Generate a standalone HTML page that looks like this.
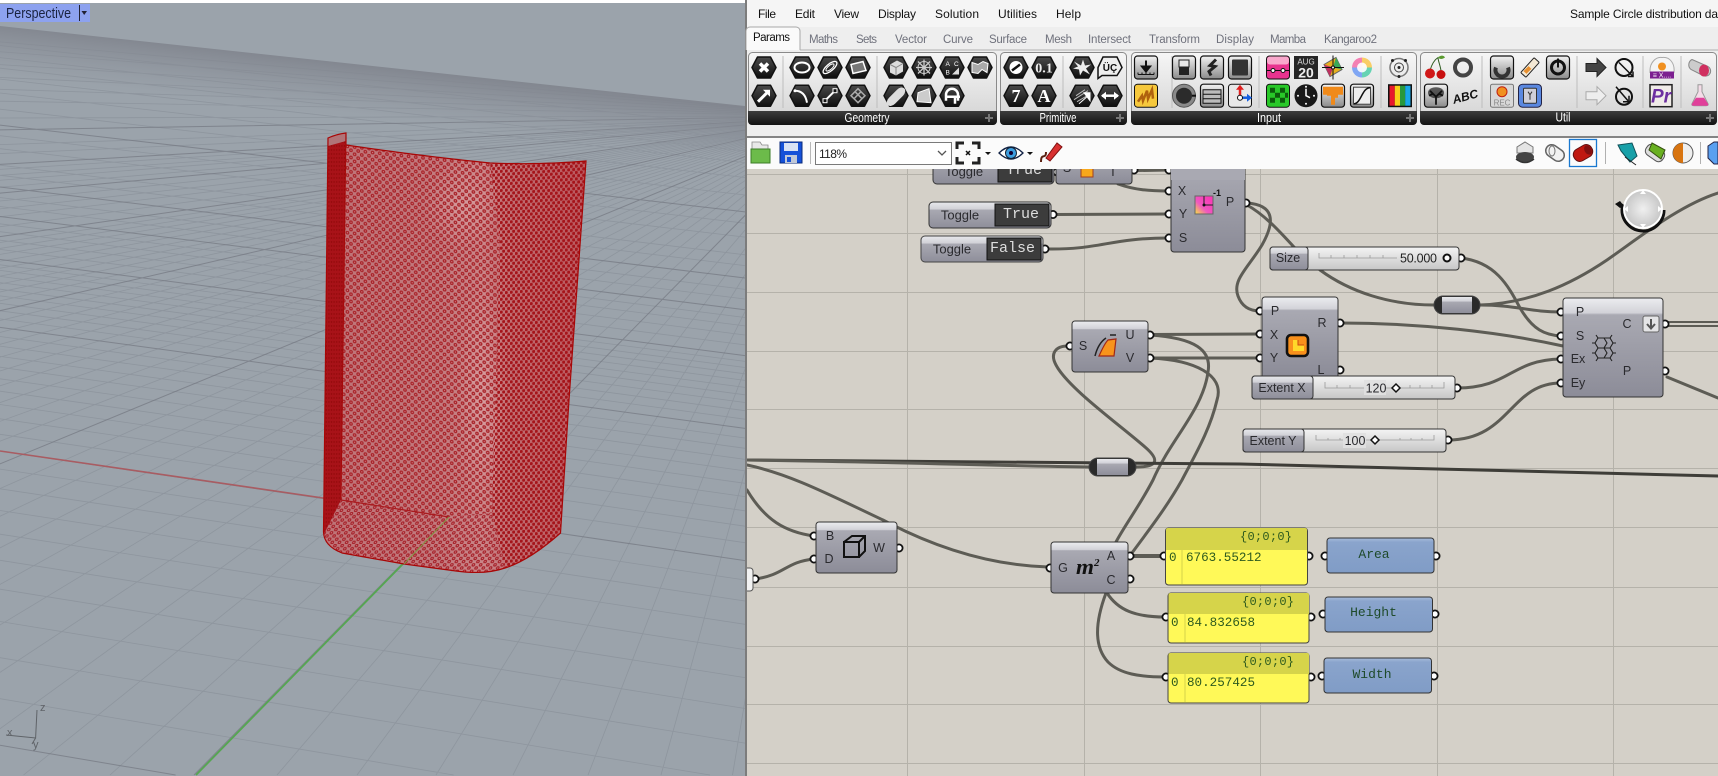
<!DOCTYPE html>
<html><head><meta charset="utf-8"><title>Rhino Grasshopper</title>
<style>
html,body{margin:0;padding:0;background:#d4d0c8;overflow:hidden;width:1718px;height:776px}
svg{display:block;font-family:"Liberation Sans","DejaVu Sans",sans-serif}
.w{fill:none;stroke:#5d5c55;stroke-width:3;stroke-linecap:round}
.g{fill:#fff;stroke:#111;stroke-width:1.8}
.l{font-size:12.5px;fill:#2a2a2e;text-anchor:middle}
.mono{font-family:"Liberation Mono",monospace}
.tb{font-size:11.5px;fill:#6f717c}
.mn{font-size:12px;fill:#111}
.bar{font-size:12.5px;fill:#fff;text-anchor:middle}
.ic{fill:#fff}
.is{fill:none;stroke:#fff;stroke-width:2}
.cl{stroke:#b5b2aa;stroke-width:1}
</style></head><body>
<svg width="1718" height="776" viewBox="0 0 1718 776" xmlns="http://www.w3.org/2000/svg">
<defs>
<linearGradient id="band" gradientUnits="userSpaceOnUse" x1="372" y1="66" x2="366" y2="120"><stop offset="0" stop-color="#80848d" stop-opacity=".9"/><stop offset="1" stop-color="#8d939c" stop-opacity="0"/></linearGradient>
<linearGradient id="bot" gradientUnits="userSpaceOnUse" x1="340" y1="0" x2="580" y2="0"><stop offset="0" stop-color="#bf7478"/><stop offset=".4" stop-color="#c27a7e"/><stop offset=".6" stop-color="#ca8689"/><stop offset=".72" stop-color="#c06e72"/><stop offset="1" stop-color="#bb5a60"/></linearGradient>
<radialGradient id="hl"><stop offset="0" stop-color="#f0c8c8" stop-opacity=".35"/><stop offset="1" stop-color="#f0c8c8" stop-opacity="0"/></radialGradient>
<pattern id="p1" width="7.2" height="7.2" patternUnits="userSpaceOnUse" patternTransform="skewY(6)"><circle cx="1.8" cy="1.8" r="1.9" fill="#a8242a"/><circle cx="1.8" cy="1.8" r=".55" fill="#d89094"/><circle cx="5.4" cy="5.4" r="1.9" fill="#a8242a"/><circle cx="5.4" cy="5.4" r=".55" fill="#d89094"/></pattern>
<pattern id="p2" width="5" height="6.4" patternUnits="userSpaceOnUse" patternTransform="skewY(-4)"><circle cx="1.2" cy="1.6" r="1.6" fill="#a5141a"/><circle cx="3.7" cy="4.8" r="1.6" fill="#a5141a"/></pattern>
<pattern id="p3" width="7.2" height="6.4" patternUnits="userSpaceOnUse" patternTransform="skewX(-16)"><circle cx="1.8" cy="1.6" r="1.8" fill="#a5222a"/><circle cx="1.8" cy="1.6" r=".55" fill="#d89094"/><circle cx="5.4" cy="4.8" r="1.8" fill="#a5222a"/><circle cx="5.4" cy="4.8" r=".55" fill="#d89094"/></pattern>
<pattern id="p4" width="2.6" height="4" patternUnits="userSpaceOnUse"><rect width="2.6" height="4" fill="#a81218"/><circle cx="1.3" cy="2" r=".7" fill="#8f0808"/></pattern>
<linearGradient id="cb" x1="0" y1="0" x2="0" y2="1"><stop offset="0" stop-color="#ecedf0"/><stop offset=".15" stop-color="#d2d2d8"/><stop offset=".17" stop-color="#a9a9b2"/><stop offset="1" stop-color="#8c8c98"/></linearGradient>
<linearGradient id="tg" x1="0" y1="0" x2="0" y2="1"><stop offset="0" stop-color="#e8e9ec"/><stop offset=".28" stop-color="#d0d0d6"/><stop offset=".3" stop-color="#a9a9b2"/><stop offset="1" stop-color="#8e8e9a"/></linearGradient>
<linearGradient id="st" x1="0" y1="0" x2="0" y2="1"><stop offset="0" stop-color="#f4f4f4"/><stop offset="1" stop-color="#c6c6c6"/></linearGradient>
<linearGradient id="rb" x1="0" y1="0" x2="0" y2="1"><stop offset="0" stop-color="#f6f6f6"/><stop offset="1" stop-color="#d2d2d2"/></linearGradient>
<linearGradient id="bk" x1="0" y1="0" x2="0" y2="1"><stop offset="0" stop-color="#3c3c3c"/><stop offset="1" stop-color="#121212"/></linearGradient>
<linearGradient id="hx" x1="0" y1="0" x2="0" y2="1"><stop offset="0" stop-color="#4a4a4a"/><stop offset="1" stop-color="#0e0e0e"/></linearGradient>
<linearGradient id="ig" x1="0" y1="0" x2="0" y2="1"><stop offset="0" stop-color="#f2f2f2"/><stop offset="1" stop-color="#8a8a8a"/></linearGradient>
<linearGradient id="pb" x1="0" y1="0" x2="0" y2="1"><stop offset="0" stop-color="#a8bcdc"/><stop offset=".12" stop-color="#8aa4cc"/><stop offset="1" stop-color="#809cc6"/></linearGradient>
<radialGradient id="dial"><stop offset="0" stop-color="#f0f0f0"/><stop offset="1" stop-color="#c6c6c6"/></radialGradient>
<linearGradient id="pk" x1="1" y1="0" x2="0" y2="1"><stop offset="0" stop-color="#ff2fb4"/><stop offset=".6" stop-color="#f058c0"/><stop offset="1" stop-color="#f6e640"/></linearGradient>
<polygon id="hex" points="-12,0 -6.5,-10.5 6.5,-10.5 12,0 6.5,10.5 -6.5,10.5" fill="url(#hx)" stroke="#111" stroke-width="1.5" stroke-linejoin="round"/>
<rect id="sq" x="-11.5" y="-11.5" width="23" height="23" rx="3" fill="url(#ig)" stroke="#111" stroke-width="1.2"/>
<clipPath id="vp"><rect x="0" y="3" width="745" height="773"/></clipPath>
<clipPath id="cv"><rect x="747" y="169" width="971" height="607"/></clipPath>
<clipPath id="gnd"><polygon points="0,26 745,106 745,776 0,776"/></clipPath>
</defs>

<!-- LEFT VIEWPORT -->
<rect width="746" height="776" fill="#fff"/>
<g clip-path="url(#vp)">
<rect x="0" y="3" width="745" height="773" fill="#9ba3ab"/>
<g clip-path="url(#gnd)">
<path fill="none" stroke="#838a94" stroke-width=".8" stroke-opacity=".55" d="M843,116L732.5,775M843,116L661,775M843,116L588,775M843,116L513,775M843,116L436,775M843,116L357,775M843,116L277,775M843,116L110,775M843,116L23.5,775M843,116L-10,736M843,116L-10,679M843,116L-10,631M843,116L-10,590M843,116L-10,553M843,116L-10,521M843,116L-10,493M843,116L-10,445M843,116L-10,425M843,116L-10,406M843,116L-10,389M843,116L-10,374M843,116L-10,360M843,116L-10,347M843,116L-10,335M843,116L-10,323M843,116L-10,303M843,116L-10,294M843,116L-10,286M843,116L-10,278M843,116L-10,270M843,116L-10,263M843,116L-10,256M843,116L-10,250M843,116L-10,244M843,116L-10,228M843,116L-10,218M843,116L-10,210M843,116L-10,202M843,116L-10,188M843,116L-10,181M843,116L-10,176M843,116L-10,170M843,116L-10,154M843,116L-10,145M843,116L-10,118M843,116L-10,101M843,116L-10,89M843,116L-10,77M843,116L-10,64M843,116L-10,51M843,116L-10,41
M0,698.7L453.6,775M0,657.7L710,775M0,621.5L745,743.1M0,589.2L745,708.5M0,560.3L745,677.6M0,534.2L745,649.6M0,510.5L745,624.3M0,488.8L745,601M0,469.1L745,580M0,434.3L745,542.7M0,418.8L745,526.2M0,404.5L745,510.8M0,391.2L745,496.6M0,378.8L745,483.3M0,367.2L745,470.9M0,356.4L745,459.4M0,346.1L745,448.3M0,336.5L745,438M0,318.9L745,419.2M0,310.8L745,410.7M0,303.3L745,402.5M0,295.9L745,394.8M0,289.2L745,387.4M0,282.6L745,380.4M0,276.4L745,373.8M0,270.4L745,367.5M0,264.8L745,361.4M0,249.4L745,344.9M0,240.2L745,335M0,231.7L745,325.9M0,223.8L745,317.5M0,206.5L745,299M0,197.5L745,289.4M0,175.3L745,265.6M0,165.2L745,254.8M0,148.7L745,237.1M0,135.7L745,223.2M0,109.2L745,195M0,93L745,177.5M0,79.1L745,162.6M0,68.2L745,151M0,57.6L745,139.7M0,45.5L745,126.7"/>
<path fill="none" stroke="#767983" stroke-width="1" stroke-opacity=".75" d="M843,116L194,775M843,116L-10,468M843,116L-10,313M843,116L-10,238M843,116L-10,194M843,116L-10,165M843,116L-10,130M0,745.3L175.6,775M0,451L745,560.6M0,327.4L745,428.4M0,259.5L745,355.6M0,216.5L745,309.7M0,187L745,278M0,125.1L745,211.9"/>
</g>
<polygon points="0,26 745,106 745,180 0,100" fill="url(#band)"/>
<line x1="0" y1="451" x2="330" y2="499" stroke="#a95c62" stroke-width="1.6"/>
<line x1="449" y1="517" x2="196" y2="775" stroke="#55a651" stroke-width="1.8"/>
<!-- bottle -->
<path d="M346,133 L346,145 Q420,156 490,163 Q540,165 586,161 L569,400 L560.5,533 Q530,560 505,568 Q485,575 456,571 L404,564 L342,553 Q324,546 323.500,532 L341,500 Z" fill="url(#bot)"/>
<ellipse cx="462" cy="205" rx="40" ry="45" fill="url(#hl)"/>
<ellipse cx="482" cy="400" rx="26" ry="120" fill="url(#hl)"/>
<path d="M346,145 Q420,156 490,163 L500,240 L492,513 L449,517 L341,500 Z" fill="url(#p1)"/>
<path d="M490,163 Q540,165 586,161 L569,400 L560.5,533 Q530,560 505,568 L492,513 L500,240 Z" fill="url(#p2)"/>
<path d="M341,500 L449,517 L492,513 L505,568 Q485,575 456,571 L404,564 L342,553 Q324,546 323.500,532 Z" fill="url(#p3)"/>
<path d="M328,138 Q337,134 346,133 L341,500 L323.500,535 Z" fill="url(#p4)"/>
<path d="M328,138 Q337,134 346,133 L346,141 L328,146Z" fill="#b07478"/>
<path d="M328,138 Q337,134 346,133 L346,145 Q420,156 490,163 Q540,165 586,161 L569,400 L560.5,533 Q530,560 505,568 Q485,575 456,571 L404,564 L342,553 Q324,546 323.500,532 Z" fill="none" stroke="#a80606" stroke-width="1.2"/>
<line x1="341" y1="500" x2="449" y2="517" stroke="#a91a1e" stroke-width="1.2"/>
<line x1="449" y1="517" x2="404" y2="564" stroke="#7f9a45" stroke-width="1"/>
<line x1="346" y1="133" x2="341" y2="500" stroke="#a50a0a" stroke-width="1"/>
<!-- gizmo -->
<path d="M37,710 L35.6,738 L6,735 M35.6,738 L32,744" fill="none" stroke="#5f6368" stroke-width="1"/>
<text x="40" y="711" font-size="11" fill="#5f6368">z</text>
<text x="7" y="736" font-size="11" fill="#5f6368">x</text>
<text x="33" y="748" font-size="11" fill="#5f6368">y</text>
<!-- tab -->
<rect x="0" y="4" width="90" height="18" fill="#8da2ef"/>
<text x="6" y="18" font-size="15" fill="#1a2340" textLength="65" lengthAdjust="spacingAndGlyphs">Perspective</text>
<line x1="79.5" y1="5" x2="79.5" y2="21" stroke="#223"/>
<polygon points="81.5,11 87,11 84.2,15" fill="#223"/>
</g>
<rect x="745" y="0" width="2" height="776" fill="#7c7c7c"/>

<!-- CANVAS -->
<rect x="747" y="0" width="971" height="776" fill="#d4d0c8"/>
<g class="cl">
<line x1="907.5" y1="169" x2="907.5" y2="776"/><line x1="1084.5" y1="169" x2="1084.5" y2="776"/><line x1="1260.5" y1="169" x2="1260.5" y2="776"/><line x1="1437.5" y1="169" x2="1437.5" y2="776"/><line x1="1613.5" y1="169" x2="1613.5" y2="776"/>
<line x1="747" y1="174.5" x2="1718" y2="174.5"/><line x1="747" y1="233.5" x2="1718" y2="233.5"/><line x1="747" y1="292.5" x2="1718" y2="292.5"/><line x1="747" y1="351.5" x2="1718" y2="351.5"/><line x1="747" y1="409.5" x2="1718" y2="409.5"/><line x1="747" y1="468.5" x2="1718" y2="468.5"/><line x1="747" y1="527.5" x2="1718" y2="527.5"/><line x1="747" y1="587.5" x2="1718" y2="587.5"/><line x1="747" y1="646.5" x2="1718" y2="646.5"/><line x1="747" y1="704.5" x2="1718" y2="704.5"/><line x1="747" y1="763.5" x2="1718" y2="763.5"/>
</g>
<g clip-path="url(#cv)">
<!-- wires -->
<g class="wires">
<path class="w" d="M1055,214.5 L1168,214"/>
<path class="w" d="M1046,249 C1100,250 1110,238 1168,238"/>
<path class="w" d="M1057,172 L1168,170"/>
<path class="w" d="M1118,184 C1135,190 1150,191 1168,191"/>
<path class="w" d="M1247,203 C1275,205 1275,222 1262,245 C1248,268 1232,280 1238,296 C1242,307 1250,311 1260,311"/>
<path class="w" d="M1247,205 C1265,215 1280,232 1293,246 C1305,258 1315,266 1320,270 C1350,292 1390,305 1434,305"/>
<path class="w" d="M1480,305 C1515,305 1530,312 1561,312"/>
<path class="w" d="M1480,305 C1530,303 1570,285 1607,260 C1640,237 1680,205 1718,193"/>
<path class="w" d="M1461,258 C1495,262 1508,285 1520,308 C1533,330 1545,335 1561,336"/>
<path class="w" d="M1340,323 C1420,323 1500,332 1563,346"/>
<path class="w" d="M1457,388 C1510,388 1510,360 1561,359"/>
<path class="w" d="M1448,440 C1510,440 1510,383 1561,383"/>
<path class="w" style="stroke-width:2" d="M1667,322 H1718"/>
<path class="w" style="stroke-width:2" d="M1667,326 H1718"/>
<path class="w" d="M1667,377 L1718,398"/>
<path class="w" d="M1150,334.5 L1260,334"/>
<path class="w" d="M1150,358 L1260,358"/>
<path class="w" d="M1068,346 C1055,346 1050,354 1056,365 C1068,388 1120,425 1145,447 C1160,460 1158,467 1136,467"/>
<path class="w" d="M1150,335 C1195,338 1212,350 1208,372 C1203,410 1170,440 1153,480 C1140,505 1125,525 1116,542"/>
<path class="w" d="M1150,358 C1195,360 1225,375 1217,400 C1210,430 1195,455 1182,480 C1165,510 1145,535 1129,557"/>
<path class="w" style="stroke:#3e3d38" d="M747,460 L1240,464 L1718,476"/>
<path class="w" d="M747,460 C900,462 1000,466 1089,467"/>
<path class="w" d="M747,465 C790,474 830,495 883,520 C930,545 985,565 1048,567"/>
<path class="w" d="M747,490 C765,520 785,532 814,536"/>
<path class="w" d="M755,579 C785,575 785,562 814,559"/>
<path class="w" d="M1130,556 H1163" style="stroke-width:4"/>
<path class="w" d="M1107,593 C1118,610 1135,617 1165,617"/>
<path class="w" d="M1106,593 C1094,625 1095,648 1108,662 C1120,674 1140,677 1165,677"/>
</g>
<!-- grips -->
<g class="g">
<circle cx="1057" cy="172" r="3.6"/><circle cx="1134" cy="170" r="3.6"/><circle cx="1169" cy="170" r="3.6"/><circle cx="1169" cy="191" r="3.6"/><circle cx="1169" cy="214" r="3.6"/><circle cx="1169" cy="238" r="3.6"/><circle cx="1246" cy="203" r="3.6"/>
<circle cx="1053" cy="214.5" r="3.6"/><circle cx="1045" cy="249" r="3.6"/><circle cx="1461" cy="258" r="3.6"/><circle cx="1457" cy="388" r="3.6"/><circle cx="1448" cy="440" r="3.6"/>
<circle cx="1260" cy="311" r="3.6"/><circle cx="1260" cy="334" r="3.6"/><circle cx="1260" cy="358" r="3.6"/><circle cx="1340" cy="323" r="3.6"/><circle cx="1340" cy="370" r="3.6"/>
<circle cx="1561" cy="312" r="3.6"/><circle cx="1561" cy="336" r="3.6"/><circle cx="1561" cy="359" r="3.6"/><circle cx="1561" cy="383" r="3.6"/><circle cx="1665" cy="324" r="3.6"/><circle cx="1665" cy="371" r="3.6"/>
<circle cx="1070" cy="346" r="3.6"/><circle cx="1150" cy="335" r="3.6"/><circle cx="1150" cy="358" r="3.6"/>
<circle cx="814" cy="536" r="3.6"/><circle cx="814" cy="559" r="3.6"/><circle cx="899" cy="548" r="3.6"/><circle cx="755" cy="579" r="3.6"/>
<circle cx="1050" cy="568" r="3.6"/><circle cx="1130" cy="556" r="3.6"/><circle cx="1130" cy="579" r="3.6"/>
<circle cx="1164" cy="556" r="3.6"/><circle cx="1309" cy="556" r="3.6"/><circle cx="1166" cy="617" r="3.6"/><circle cx="1311" cy="617" r="3.6"/><circle cx="1166" cy="677" r="3.6"/><circle cx="1311" cy="677" r="3.6"/>
<circle cx="1325" cy="556" r="3.6"/><circle cx="1436" cy="556" r="3.6"/><circle cx="1323" cy="614" r="3.6"/><circle cx="1435" cy="614" r="3.6"/><circle cx="1322" cy="676" r="3.6"/><circle cx="1434" cy="676" r="3.6"/>
</g>
<!-- clipped toggle -->
<rect x="933" y="150" width="121" height="34" rx="4" fill="url(#cb)" stroke="#333"/>
<text class="l" x="964" y="176" style="font-size:13px">Toggle</text>
<rect x="998" y="150" width="54" height="32" fill="#3c3c3c" stroke="#111"/>
<text class="mono" x="1006" y="174" font-size="15" fill="#ddd">True</text>
<rect x="1056" y="150" width="76" height="34" rx="3" fill="url(#cb)" stroke="#333"/>
<text class="l" x="1067" y="172">S</text><rect x="1081" y="160" width="12" height="17" fill="#f8a81c" stroke="#a04020"/><text class="l" x="1113" y="176">T</text>
<!-- XY rect comp -->
<rect x="1171" y="150" width="74" height="102" rx="3" fill="url(#cb)" stroke="#333"/>
<rect x="1171" y="150" width="74" height="30" fill="#a9a9b2"/>
<text class="l" x="1182" y="195">X</text><text class="l" x="1183" y="218">Y</text><text class="l" x="1183" y="242">S</text><text class="l" x="1230" y="206">P</text>
<rect x="1195" y="196" width="18" height="18" fill="url(#pk)" stroke="#666"/><path d="M1204,196 V205 H1213" fill="none" stroke="#222" stroke-width="1"/><circle cx="1204" cy="205" r="1.500" fill="#111"/><text x="1213" y="196" font-size="9" font-weight="bold" fill="#111">-1</text>
<!-- toggles -->
<rect x="929" y="202" width="122" height="26" rx="4" fill="url(#tg)" stroke="#333"/>
<text class="l" x="960" y="219.500" style="font-size:13px">Toggle</text>
<rect x="995" y="204" width="54" height="22" fill="#3c3c3c" stroke="#111"/>
<text class="mono" x="1003" y="218" font-size="15" fill="#ddd">True</text>
<rect x="921" y="236" width="122" height="26" rx="4" fill="url(#tg)" stroke="#444"/>
<text class="l" x="952" y="253.500" style="font-size:13px">Toggle</text>
<rect x="987" y="238" width="54" height="22" fill="#3c3c3c" stroke="#111"/>
<text class="mono" x="990" y="252" font-size="15" fill="#ddd">False</text>
<!-- UV comp -->
<rect x="1072" y="321" width="76" height="51" rx="3" fill="url(#cb)" stroke="#333"/>
<text class="l" x="1083" y="350">S</text><text class="l" x="1130" y="339">U</text><text class="l" x="1130" y="362">V</text>
<path d="M1099,356 C1103,347 1106,342 1108,340 L1116,339 L1114,356 Z" fill="#f8941c" stroke="#a02818" stroke-width="1.2"/>
<path d="M1095,356 C1097,348 1100,342 1106,338 M1110,335 H1116" fill="none" stroke="#222" stroke-width="1.5"/>
<!-- sliders -->
<rect x="1270" y="247" width="189" height="23" rx="3" fill="url(#st)" stroke="#333"/>
<rect x="1270" y="247" width="38" height="23" rx="3" fill="url(#tg)" stroke="#333"/>
<text class="l" x="1288" y="262">Size</text>
<path d="M1319,253 V258 H1397 M1331,255 V258 M1344,255 V258 M1357,255 V258 M1370,255 V258 M1383,255 V258" fill="none" stroke="#9a9a9a" stroke-width=".8"/>
<text x="1400" y="262.5" font-size="12.5" fill="#222" textLength="37">50.000</text>
<circle cx="1447" cy="258" r="3.5" fill="#fff" stroke="#111" stroke-width="2"/>
<rect x="1252" y="376" width="203" height="23" rx="3" fill="url(#st)" stroke="#333"/>
<rect x="1252" y="376" width="61" height="23" rx="3" fill="url(#tg)" stroke="#333"/>
<text class="l" x="1282" y="392">Extent X</text>
<path d="M1325,382 V388 H1444 V382 M1337,385 V388 M1350,385 V388 M1410,385 V388 M1420,385 V388 M1432,385 V388" fill="none" stroke="#9a9a9a" stroke-width=".8"/>
<rect x="1364" y="380" width="22" height="15" fill="#e0e0e0" opacity=".9"/>
<text class="l" x="1376" y="392.5">120</text>
<path d="M1396,384 L1400,388 1396,392 1392,388Z" fill="#fff" stroke="#111" stroke-width="1.5"/>
<rect x="1243" y="429" width="203" height="23" rx="3" fill="url(#st)" stroke="#333"/>
<rect x="1243" y="429" width="61" height="23" rx="3" fill="url(#tg)" stroke="#333"/>
<text class="l" x="1273" y="445">Extent Y</text>
<path d="M1316,435 V440 H1434 V435 M1328,438 V440 M1340,438 V440 M1400,438 V440 M1411,438 V440 M1422,438 V440" fill="none" stroke="#9a9a9a" stroke-width=".8"/>
<rect x="1343" y="433" width="23" height="15" fill="#e0e0e0" opacity=".9"/>
<text class="l" x="1355" y="445">100</text>
<path d="M1375,436 L1379,440 1375,444 1371,440Z" fill="#fff" stroke="#111" stroke-width="1.5"/>
<!-- Rect comp -->
<path d="M1262,376 V300 a3,3 0 0 1 3,-3 H1335 a3,3 0 0 1 3,3 V376 Z" fill="url(#cb)" stroke="#333"/>
<text class="l" x="1275" y="315">P</text><text class="l" x="1274" y="339">X</text><text class="l" x="1274" y="362">Y</text><text class="l" x="1322" y="327">R</text><text class="l" x="1321" y="374">L</text>
<rect x="1287" y="335" width="21" height="21" rx="4" fill="#f8901c" stroke="#111" stroke-width="2.600"/><path d="M1293,340 V351 H1304 V345 H1298 V340Z" fill="#ffd82a"/><path d="M1298,340 V345 H1304" fill="none" stroke="#c84a10"/>
<!-- Hex comp -->
<rect x="1563" y="298" width="100" height="99" rx="3" fill="url(#cb)" stroke="#333"/>
<text class="l" x="1580" y="316">P</text><text class="l" x="1580" y="340">S</text><text class="l" x="1578" y="363">Ex</text><text class="l" x="1578" y="387">Ey</text><text class="l" x="1627" y="328">C</text><text class="l" x="1627" y="375">P</text>
<g fill="none" stroke="#222" stroke-width="1.100"><path d="M1598,338 h6 l3,5 l-3,5 h-6 l-3,-5z"/><path d="M1604,338 h6 l3,5 l-3,5 h-6"/><path d="M1598,348 l-3,5 l3,5 h6 l3,-5 l-3,-5"/><path d="M1604,358 h6 l3,-5 l-3,-5"/><path d="M1595,343 h-3 M1613,343 h3 M1595,353 h-3 M1613,353 h3 M1598,338 l-2,-3 M1610,338 l2,-3 M1598,358 l-2,3 M1610,358 l2,3"/></g>
<rect x="1643" y="316" width="16" height="16" rx="2" fill="#e4e4e6" stroke="#666"/><path d="M1651,319 V328 M1647,324 L1651,328.5 1655,324" fill="none" stroke="#555" stroke-width="2"/>
<!-- relays -->
<rect x="1434" y="296" width="46" height="18" rx="9" fill="#2a2a2a" stroke="#444"/><rect x="1442" y="297" width="30" height="16" fill="url(#tg)"/>
<rect x="1089" y="458" width="47" height="18" rx="9" fill="#2a2a2a" stroke="#444"/><rect x="1097" y="459" width="31" height="16" fill="url(#tg)"/>
<!-- dial -->
<circle cx="1643" cy="210" r="21" fill="none" stroke="#111" stroke-width="3" stroke-dasharray="72 60"/>
<circle cx="1643" cy="209" r="19" fill="url(#dial)" stroke="#fff" stroke-width="2"/>
<path d="M1643,190 l-3,4 h6z M1643,228 l-3,-4 h6z M1624,209 l4,-3 v6z M1662,209 l-4,-3 v6z" fill="#fff"/>
<path d="M1615,204 L1620,201 1624,206 1620,208Z" fill="#111"/>
<!-- box comp -->
<rect x="816" y="522" width="81" height="51" rx="3" fill="url(#cb)" stroke="#333"/>
<text class="l" x="830" y="540">B</text><text class="l" x="829" y="563">D</text><text class="l" x="879" y="552">W</text>
<g fill="none" stroke="#111" stroke-width="2"><rect x="844" y="542" width="15" height="15"/><path d="M844,542 l8,-6 h13 v15 l-6,6 M859,542 l6,-6"/></g>
<path d="M745,568 h5 a3,3 0 0 1 3,3 v17 a3,3 0 0 1 -3,3 h-5z" fill="#f2f2f2" stroke="#555"/>
<!-- area comp -->
<rect x="1051" y="542" width="77" height="51" rx="3" fill="url(#cb)" stroke="#333"/>
<text class="l" x="1063" y="572">G</text><text class="l" x="1111" y="560">A</text><text class="l" x="1111" y="584">C</text>
<text x="1076" y="574" font-family="Liberation Serif,serif" font-size="22" font-weight="bold" font-style="italic" fill="#111" textLength="18" lengthAdjust="spacingAndGlyphs">m</text><text x="1094" y="566" font-family="Liberation Serif,serif" font-size="11" font-weight="bold" font-style="italic" fill="#111">2</text>
<!-- panels -->
<g>
<rect x="1165.5" y="528" width="142" height="57" rx="3" fill="#fff958" stroke="#444"/><path d="M1166,550 V530 a2,2 0 0 1 2,-2 H1305 a2,2 0 0 1 2,2 V550 Z" fill="#d6d44a"/><line x1="1182" y1="529" x2="1182" y2="584" stroke="#d6d44a"/>
<text class="mono" x="1240" y="540" font-size="12" fill="#2d5a1e" textLength="52">{0;0;0}</text>
<text class="mono" x="1169" y="561" font-size="12.6" fill="#2d5a1e">0</text><text class="mono" x="1186" y="561" font-size="12.6" fill="#2d5a1e">6763.55212</text>
<rect x="1168" y="593" width="141" height="50" rx="3" fill="#fff958" stroke="#444"/><path d="M1168.500,614 V595 a2,2 0 0 1 2,-2 H1307 a2,2 0 0 1 2,2 V614 Z" fill="#d6d44a"/><line x1="1185" y1="594" x2="1185" y2="642" stroke="#d6d44a"/>
<text class="mono" x="1242" y="605" font-size="12" fill="#2d5a1e" textLength="52">{0;0;0}</text>
<text class="mono" x="1171" y="626" font-size="12.6" fill="#2d5a1e">0</text><text class="mono" x="1187" y="626" font-size="12.6" fill="#2d5a1e">84.832658</text>
<rect x="1168" y="653" width="141" height="50" rx="3" fill="#fff958" stroke="#444"/><path d="M1168.500,674 V655 a2,2 0 0 1 2,-2 H1307 a2,2 0 0 1 2,2 V674 Z" fill="#d6d44a"/><line x1="1185" y1="654" x2="1185" y2="702" stroke="#d6d44a"/>
<text class="mono" x="1242" y="665" font-size="12" fill="#2d5a1e" textLength="52">{0;0;0}</text>
<text class="mono" x="1171" y="686" font-size="12.6" fill="#2d5a1e">0</text><text class="mono" x="1187" y="686" font-size="12.6" fill="#2d5a1e">80.257425</text>
</g>
<!-- params -->
<rect x="1327" y="538" width="107" height="35" rx="3" fill="url(#pb)" stroke="#333"/>
<text class="mono" x="1374" y="558" font-size="13" fill="#1e4a2a" text-anchor="middle">Area</text>
<rect x="1325" y="597" width="107.500" height="35" rx="3" fill="url(#pb)" stroke="#333"/>
<text class="mono" x="1373.500" y="616" font-size="13" fill="#1e4a2a" text-anchor="middle">Height</text>
<rect x="1324" y="658" width="107.500" height="35" rx="3" fill="url(#pb)" stroke="#333"/>
<text class="mono" x="1372" y="678" font-size="13" fill="#1e4a2a" text-anchor="middle">Width</text>
</g>

<!-- MENU + TABS -->
<rect x="747" y="0" width="971" height="27" fill="#f5f5f5"/>
<g class="mn">
<text x="758" y="18" textLength="18">File</text><text x="795" y="18" textLength="20">Edit</text><text x="834" y="18" textLength="25">View</text><text x="878" y="18" textLength="38">Display</text><text x="935" y="18" textLength="44">Solution</text><text x="998" y="18" textLength="39">Utilities</text><text x="1056" y="18" textLength="25">Help</text>
<text x="1570" y="18" textLength="148">Sample Circle distribution da</text>
</g>
<rect x="747" y="27" width="971" height="109" fill="#eeeeee"/>
<path d="M746,50 V31 a4,4 0 0 1 4,-4 H796 a4,4 0 0 1 4,4 V50" fill="#fafafa" stroke="#a8a8a8"/>
<text x="753" y="41" font-size="11.5" fill="#111" textLength="37">Params</text>
<g class="tb">
<text x="809" y="43" textLength="29">Maths</text><text x="856" y="43" textLength="21">Sets</text><text x="895" y="43" textLength="32">Vector</text><text x="943" y="43" textLength="30">Curve</text><text x="989" y="43" textLength="38">Surface</text><text x="1045" y="43" textLength="27">Mesh</text><text x="1088" y="43" textLength="43">Intersect</text><text x="1149" y="43" textLength="51">Transform</text><text x="1216" y="43" textLength="38">Display</text><text x="1270" y="43" textLength="36">Mamba</text><text x="1324" y="43" textLength="53">Kangaroo2</text>
</g>
<line x1="800" y1="50" x2="1718" y2="50" stroke="#b0b0b0"/>
<!-- ribbon panels -->
<g stroke="#8a8a8a">
<rect x="748.500" y="52.500" width="248" height="72" rx="4" fill="url(#rb)"/>
<rect x="1000.500" y="52.500" width="126" height="72" rx="4" fill="url(#rb)"/>
<rect x="1131.500" y="52.500" width="285" height="72" rx="4" fill="url(#rb)"/>
<rect x="1420.500" y="52.500" width="296" height="72" rx="4" fill="url(#rb)"/>
</g>
<g fill="url(#bk)">
<path d="M748,111 H997 V121 a4,4 0 0 1 -4,4 H752 a4,4 0 0 1 -4,-4Z"/>
<path d="M1000,111 H1127 V121 a4,4 0 0 1 -4,4 H1004 a4,4 0 0 1 -4,-4Z"/>
<path d="M1131,111 H1417 V121 a4,4 0 0 1 -4,4 H1135 a4,4 0 0 1 -4,-4Z"/>
<path d="M1420,111 H1717 V121 a4,4 0 0 1 -4,4 H1424 a4,4 0 0 1 -4,-4Z"/>
</g>
<g class="bar"><text x="867" y="122" textLength="45" lengthAdjust="spacingAndGlyphs">Geometry</text><text x="1058" y="122" textLength="37" lengthAdjust="spacingAndGlyphs">Primitive</text><text x="1269" y="122" textLength="24" lengthAdjust="spacingAndGlyphs">Input</text><text x="1563" y="121.500" textLength="15" lengthAdjust="spacingAndGlyphs">Util</text></g>
<g stroke="#777" stroke-width="2"><path d="M985,118 h8 M989,114 v8"/><path d="M1116,118 h8 M1120,114 v8"/><path d="M1406,118 h8 M1410,114 v8"/><path d="M1706,118 h8 M1710,114 v8"/></g>
<g stroke="#bdbdbd"><line x1="783" y1="56" x2="783" y2="108"/><line x1="877" y1="56" x2="877" y2="108"/><line x1="1063" y1="56" x2="1063" y2="108"/><line x1="1172" y1="56" x2="1172" y2="108"/><line x1="1259" y1="56" x2="1259" y2="108"/><line x1="1381" y1="56" x2="1381" y2="108"/><line x1="1482" y1="56" x2="1482" y2="108"/><line x1="1577" y1="56" x2="1577" y2="108"/><line x1="1643" y1="56" x2="1643" y2="108"/><line x1="1681" y1="56" x2="1681" y2="108"/></g>

<!-- Geometry hexes -->
<g transform="translate(764,67.500)"><use href="#hex"/><path d="M-4,-4 L4,4 M4,-4 L-4,4" stroke="#fff" stroke-width="3.5"/></g>
<g transform="translate(802,67.500)"><use href="#hex"/><ellipse rx="7.500" ry="5" class="is"/></g>
<g transform="translate(830,67.500)"><use href="#hex"/><ellipse rx="8.500" ry="3.500" transform="rotate(-40)" class="is" style="stroke-width:1.3"/><ellipse rx="5" ry="2" transform="rotate(-40)" class="is" style="stroke-width:1"/></g>
<g transform="translate(858,67.500)"><use href="#hex"/><path d="M-7,-3 L5,-6 8,3 -5,6Z" fill="#777" stroke="#fff" stroke-width="1.5"/></g>
<g transform="translate(896,67.500)"><use href="#hex"/><path d="M-6,-3 L1,-7 7,-4 7,4 0,8 -6,5Z" fill="#ddd"/><path d="M-6,-3 L0,0 7,-4 M0,0 V8" stroke="#888" fill="none"/></g>
<g transform="translate(924,67.500)"><use href="#hex"/><path d="M-8,0 H8 M0,-8 V8 M-6,-6 L6,6 M6,-6 L-6,6" stroke="#ccc" stroke-width="1.3"/><circle r="6" fill="none" stroke="#ccc"/></g>
<g transform="translate(952,67.500)"><use href="#hex"/><text x="-6.500" y="-1.500" font-size="6.500" fill="#fff">A</text><text x="2" y="-1.500" font-size="6.500" fill="#fff">C</text><text x="-6.500" y="7" font-size="6.500" fill="#fff">B</text><path d="M0,7 L7,0 V7Z" fill="#ddd"/></g>
<g transform="translate(980,67.500)"><use href="#hex"/><path d="M-8,-5 L-2,-3 3,-6 8,-4 7,5 2,2 -2,6 -8,5Z" fill="#aaa" stroke="#fff"/></g>
<g transform="translate(764,95.700)"><use href="#hex"/><path d="M-6,6 L4,-4" stroke="#fff" stroke-width="3"/><path d="M-1,-6 H6 V1Z" fill="#fff"/></g>
<g transform="translate(802,95.700)"><use href="#hex"/><path d="M-7,-5 C1,-5 4,1 5,7" class="is"/><circle cx="-7" cy="-5" r="1.500" fill="#fff"/></g>
<g transform="translate(830,95.700)"><use href="#hex"/><path d="M-5,5 L5,-5" class="is"/><rect x="-7" y="3" width="4" height="4" fill="#111" stroke="#fff"/><rect x="3" y="-7" width="4" height="4" fill="#111" stroke="#fff"/></g>
<g transform="translate(858,95.700)"><use href="#hex"/><path d="M-7,0 L0,-7 7,0 0,7Z M-3,-4 L4,3 M3,-4 L-4,3" fill="none" stroke="#aaa" stroke-width="1.500"/></g>
<g transform="translate(896,95.700)"><use href="#hex"/><path d="M-7,2 L1,-6 A3.500,5 45 0 1 7,0 L-1,8 A3.500,5 45 0 1 -7,2Z" fill="#ddd"/></g>
<g transform="translate(924,95.700)"><use href="#hex"/><path d="M-6,-3 L5,-7 7,7 -7,6Z" fill="#ccc" stroke="#fff"/></g>
<g transform="translate(952,95.700)"><use href="#hex"/><path d="M-6,5 V-1 A6,6 0 0 1 6,-1 V5 M-6,1 H8 M3,1 V8" class="is" style="stroke-width:2.500"/></g>
<!-- Primitive hexes -->
<g transform="translate(1016,67.500)"><use href="#hex"/><circle r="6.500" fill="#fff"/><path d="M-4,3 L4,-3" stroke="#111" stroke-width="2.500"/></g>
<g transform="translate(1044,67.500)"><use href="#hex"/><text x="0" y="5" font-family="Liberation Serif,serif" font-size="14" font-weight="bold" fill="#eee" text-anchor="middle">0.1</text></g>
<g transform="translate(1082,67.500)"><use href="#hex"/><path d="M-8,-6 L-1,-2 1,-8 3,-2 9,-3 4,1 8,7 1,3 -2,8 -3,2 -9,1 -4,-1Z" fill="#eee"/></g>
<g transform="translate(1110,67.500)"><path d="M-12,0 L-7,-10.500 7,-10.500 12,0 7,8 -8,8 -12,11Z" fill="#eee" stroke="#111" stroke-width="1.500"/><text x="0" y="3.500" font-size="10" fill="#111" font-weight="bold" text-anchor="middle">ÜÇ</text></g>
<g transform="translate(1016,95.700)"><use href="#hex"/><text x="0" y="6.500" font-family="Liberation Serif,serif" font-size="18" font-weight="bold" fill="#fff" text-anchor="middle">7</text></g>
<g transform="translate(1044,95.700)"><use href="#hex"/><text x="0" y="6.500" font-family="Liberation Serif,serif" font-size="18" font-weight="bold" fill="#fff" text-anchor="middle">A</text></g>
<g transform="translate(1082,95.700)"><use href="#hex"/><path d="M-8,4 L6,-5 M-6,0 L3,-6 M-5,6 L7,-1" stroke="#bbb"/><path d="M-3,8 L5,1 M2,-3 H8 V5Z" stroke="#fff" fill="#fff"/></g>
<g transform="translate(1110,95.700)"><use href="#hex"/><path d="M-8,0 H8" stroke="#fff" stroke-width="2.500"/><path d="M-9,0 L-4,-4 V4Z M9,0 L4,-4 V4Z" fill="#fff"/></g>
<!-- Input -->
<g transform="translate(1146,67.500)"><use href="#sq"/><path d="M0,-7 V2 M-4,-1 L0,4 4,-1Z" fill="#111" stroke="#111" stroke-width="2"/><path d="M-8,7 H8 M-8,5 V7 M-4,5 V7 M0,5 V7 M4,5 V7 M8,5 V7" stroke="#111"/></g>
<g transform="translate(1146,95.700)"><rect x="-11.500" y="-11.500" width="23" height="23" rx="3" fill="#f6c83c" stroke="#111"/><path d="M-8,6 L-4,0 -3,5 1,-5 2,3 6,-6 7,3" fill="none" stroke="#b0620e" stroke-width="2.500"/></g>
<g transform="translate(1184,67.500)"><use href="#sq"/><rect x="-5" y="-7.500" width="10" height="15" fill="#222"/><rect x="-5" y="-7.500" width="10" height="7" fill="#e8e8e8" stroke="#222"/></g>
<g transform="translate(1212,67.500)"><use href="#sq"/><path d="M4,-8 L-2,-2 3,-1 -3,4 -1,8" fill="none" stroke="#222" stroke-width="3"/></g>
<g transform="translate(1240,67.500)"><use href="#sq"/><rect x="-8" y="-8" width="16" height="16" rx="1" fill="#333"/></g>
<g transform="translate(1184,95.700)"><circle r="11.500" fill="#8a8a8a" stroke="#555"/><circle r="8" fill="#2b2b2b"/><path d="M8,0 L12,0" stroke="#111" stroke-width="2"/></g>
<g transform="translate(1212,95.700)"><use href="#sq"/><path d="M-9,-6 H9 V-1.500 H-9Z M-9,-1.500 H9 V3 H-9Z M-9,3 H9 V7.500 H-9Z" fill="#bbb" stroke="#111"/></g>
<g transform="translate(1240,95.700)"><rect x="-11.500" y="-11.500" width="23" height="23" rx="3" fill="#e8e8e8" stroke="#111"/><path d="M0,2 V-8" stroke="#e02020" stroke-width="2.500"/><path d="M0,2 H9" stroke="#1860e0" stroke-width="2.500"/><path d="M-4,-6 L0,-11 4,-6Z" fill="#e02020"/><path d="M7,-2 L12,2 7,6Z" fill="#1860e0"/><circle cy="2" r="2.500" fill="#fff" stroke="#111"/></g>
<g transform="translate(1278,67.500)"><rect x="-11.500" y="-11.500" width="23" height="23" rx="3" fill="#e8338f" stroke="#111"/><rect x="-11" y="-11" width="22" height="8" rx="3" fill="#f8a8cc"/><path d="M-11,3 H11" stroke="#111"/><circle cx="-5" cy="3" r="2" fill="#fff" stroke="#111"/><circle cx="5" cy="3" r="2" fill="#fff" stroke="#111"/></g>
<g transform="translate(1306,67.500)"><rect x="-12" y="-11.500" width="24" height="23" fill="#262626"/><text x="0" y="-3" font-size="8" fill="#ddd" text-anchor="middle">AUG</text><text x="0" y="10" font-size="14" font-weight="bold" fill="#eee" text-anchor="middle">20</text></g>
<g transform="translate(1333,67.500)"><path d="M-9,-3 L3,-10 9,2 -3,9Z" fill="#e8b020" stroke="#666"/><path d="M0,0 L3,-10 9,2Z" fill="#38a858"/><path d="M0,0 L-3,9 -9,-3Z" fill="#c03060"/><path d="M-11,0 H11 M0,-12 V12" stroke="#111"/><circle r="1.500" fill="#fff" stroke="#111"/></g>
<g transform="translate(1362,67.500)"><circle r="10" fill="#fff"/><path d="M0,-10 A10,10 0 0 1 10,0 L0,0Z" fill="#f8c040" opacity=".8"/><path d="M10,0 A10,10 0 0 1 0,10 L0,0Z" fill="#40c8a0" opacity=".8"/><path d="M0,10 A10,10 0 0 1 -10,0 L0,0Z" fill="#6090f0" opacity=".8"/><path d="M-10,0 A10,10 0 0 1 0,-10 L0,0Z" fill="#f060a0" opacity=".8"/><circle r="5" fill="#fff" opacity=".9"/></g>
<g transform="translate(1399,67.500)"><circle r="9" fill="none" stroke="#777" stroke-width="1.500"/><circle r="4.500" fill="none" stroke="#444"/><circle r="1.500" fill="#222"/><circle cx="-6.500" cy="-7" r="1.500" fill="#222"/><circle cx="6.500" cy="-7" r="1.500" fill="#222"/><circle cy="9" r="1.500" fill="#222"/></g>
<g transform="translate(1400,95.700)"><rect x="-12" y="-11.500" width="24" height="23" fill="#111"/><rect x="-10.500" y="-10" width="5.300" height="20" fill="#e8182c"/><rect x="-5.200" y="-10" width="5.200" height="20" fill="#f8d018"/><rect x="0" y="-10" width="5.200" height="20" fill="#28983c"/><rect x="5.200" y="-10" width="5.300" height="20" fill="#18a8e8"/></g>
<g transform="translate(1278,95.700)"><rect x="-11.500" y="-11.500" width="23" height="23" rx="3" fill="#28c828" stroke="#111"/><path d="M-8,-8 h5 v5 h-5z M2,-8 h5 v5 h-5z M-3,-3 h5 v5 h-5z M7,-3 h3 v5 h-3z M-8,2 h5 v5 h-5z M2,2 h5 v5 h-5z" fill="#0c5c0c"/></g>
<g transform="translate(1306,95.700)"><circle r="11.500" fill="#181818"/><path d="M0,-7 V0 L4,2" stroke="#fff" fill="none" stroke-width="1.500"/><circle cx="-8" r="1" fill="#fff"/><circle cx="8" r="1" fill="#fff"/><circle cy="8" r="1" fill="#fff"/><circle cy="-9" r="1" fill="#fff"/></g>
<g transform="translate(1333,95.700)"><use href="#sq"/><path d="M-10,-9 H10 V-1 H5 V2 H2 V9 H-2 V0 H-6 V-1 H-10Z" fill="#f08a1a"/></g>
<g transform="translate(1362,95.700)"><use href="#sq"/><rect x="-8.500" y="-8.500" width="17" height="17" fill="#eee" stroke="#444"/><path d="M-8,8 C-1,8 0,-8 8,-8" fill="none" stroke="#111" stroke-width="1.500"/></g>
<!-- Util -->
<g transform="translate(1435,67.500)"><path d="M-5,3 C-3,-4 0,-8 3,-10 M6,3 C5,-3 3,-7 3,-10" stroke="#2d5a1e" fill="none"/><path d="M3,-10 C6,-13 9,-12 10,-10 C7,-8 5,-8 3,-10Z" fill="#5a9a30"/><circle cx="-5" cy="6" r="5" fill="#d01818"/><circle cx="6" cy="7" r="4.500" fill="#c81010"/></g>
<g transform="translate(1463,67.500)"><circle r="8" fill="none" stroke="#444" stroke-width="4"/></g>
<g transform="translate(1502,67.500)"><use href="#sq"/><path d="M-6,0 A6.500,6.500 0 1 0 6,0" fill="none" stroke="#333" stroke-width="4"/></g>
<g transform="translate(1530,67.500)"><rect x="-3.500" y="-10" width="7" height="20" rx="1" transform="rotate(42)" fill="#f4e8d4" stroke="#222"/><path d="M-5,5 L0,0" stroke="#e89030" stroke-width="4"/></g>
<g transform="translate(1558,67.500)"><use href="#sq"/><circle r="6.500" fill="none" stroke="#111" stroke-width="3"/><path d="M0,-9 V0" stroke="#111" stroke-width="2"/></g>
<g transform="translate(1596,67.500)"><path d="M-10,-4 H1 V-9 L10,0 1,9 V4 H-10Z" fill="#444" stroke="#222"/></g>
<g transform="translate(1624,67.500)"><circle r="8.500" fill="none" stroke="#111" stroke-width="2"/><path d="M-5,-5 L9,9 M4,9 H9 V4" fill="none" stroke="#111" stroke-width="1.500"/></g>
<g transform="translate(1662,67.500)"><path d="M-12,3 C-12,-5 -6,-11 0,-10 C8,-11 13,-4 12,5 H-12Z" fill="#f4f4f4" stroke="#aaa"/><circle cy="-1" r="4" fill="#f09020"/><rect x="-12" y="4" width="24" height="7" fill="#7c1f90"/><text x="0" y="10" font-size="7" fill="#fff" text-anchor="middle">≡ X....</text></g>
<g transform="translate(1700,67.500)"><path d="M-8,-8 L8,-1 A5,5 0 0 1 3,8 L-9,2 A6,6 0 0 1 -8,-8Z" fill="#ccc" stroke="#888"/><ellipse cx="4" cy="3" rx="5" ry="6" fill="#d03060"/></g>
<g transform="translate(1436,95.700)"><use href="#sq"/><path d="M0,9 V0 M0,1 L-6,-5 M0,1 L6,-5 M-3,-2 L-7,0 M3,-2 L7,0" stroke="#111" stroke-width="1.800"/><ellipse cy="-3" rx="8" ry="5.500" fill="#111" opacity=".65"/></g>
<g transform="translate(1465,95.700)"><text x="0" y="5" font-size="12" font-weight="bold" font-style="italic" fill="#111" text-anchor="middle" transform="rotate(-15)">ABC</text></g>
<g transform="translate(1502,95.700)"><rect x="-11.500" y="-11.500" width="23" height="23" rx="2" fill="#d8d8d8" stroke="#777"/><circle cy="-4" r="5" fill="#f09020" stroke="#c02010"/><text x="0" y="10" font-size="8" fill="#888" text-anchor="middle">REC</text></g>
<g transform="translate(1530,95.700)"><rect x="-11.500" y="-11.500" width="23" height="23" rx="4" fill="#5a88e0" stroke="#224"/><rect x="-6.500" y="-7.500" width="13" height="15" rx="1" fill="#cfcfd8" stroke="#333"/><path d="M-2,-4 L0,-1 2,-4 M0,-1 V4" stroke="#333" fill="none"/></g>
<g transform="translate(1596,95.700)"><path d="M-10,-4 H1 V-9 L10,0 1,9 V4 H-10Z" fill="#eee" stroke="#aaa"/></g>
<g transform="translate(1624,95.700)"><circle cy="1" r="8" fill="none" stroke="#111" stroke-width="2"/><path d="M-8,-9 L4,5 M-1,6 H5 V0" fill="none" stroke="#111" stroke-width="1.500"/></g>
<g transform="translate(1661,95.700)"><rect x="-11" y="-11" width="22" height="22" fill="#f0ece8" stroke="#222" stroke-width="1.500"/><text x="0" y="7" font-size="19" font-weight="bold" font-style="italic" fill="#6c2fa0" text-anchor="middle">Pr</text></g>
<g transform="translate(1700,95.700)"><path d="M-2,-11 H2 V-4 L8,8 Q9,10 6,10 H-6 Q-9,10 -8,8 L-2,-4Z" fill="#f4dce8" stroke="#999"/><path d="M-4,2 H4 L8,8 Q9,10 6,10 H-6 Q-9,10 -8,8Z" fill="#e0409a"/></g>

<!-- TOOLBAR -->
<rect x="747" y="136" width="971" height="2" fill="#848484"/>
<rect x="747" y="138" width="971" height="31" fill="#fbfbfb"/>
<path d="M752,147 V142 h8 l2,3 h6 v5 h-16z" fill="#e8e8e8" stroke="#888" stroke-width=".8"/><rect x="751" y="149" width="19" height="14" fill="#6cbb4a" stroke="#3c7c28"/>
<path d="M780,142 h22 v21 h-22z" fill="#1450d8" stroke="#0a2a7a"/><rect x="784" y="143" width="14" height="8" fill="#d8e2f4"/><rect x="785" y="155" width="12" height="8" fill="#c0c8d8"/><rect x="787" y="157" width="4" height="5" fill="#1450d8"/>
<line x1="810.500" y1="142" x2="810.500" y2="164" stroke="#b8b8b8"/>
<rect x="815.500" y="142.500" width="136" height="22" fill="#fff" stroke="#7a7a7a"/>
<text x="819" y="158" font-size="12" fill="#222" textLength="28">118%</text>
<path d="M938,151 L942,155 946,151" fill="none" stroke="#555" stroke-width="1.300"/>
<path d="M957,149 V143 H964 M972,143 H979 V149 M979,157 V163 H972 M964,163 H957 V157" fill="none" stroke="#222" stroke-width="3"/><path d="M966,151 L970,155 M970,151 L966,155" stroke="#111" stroke-width="1.500"/>
<polygon points="985,152 991,152 988,155" fill="#111"/>
<path d="M999,153 Q1011,141 1023,153 Q1011,165 999,153Z" fill="#fff" stroke="#124" stroke-width="1.300"/><circle cx="1011" cy="153" r="5.500" fill="#3c9ee0" stroke="#123"/><circle cx="1011" cy="153" r="2" fill="#103"/>
<polygon points="1027,152 1033,152 1030,155" fill="#111"/>
<path d="M1041,162 C1041,152 1046,160 1046,152" fill="none" stroke="#5a2010" stroke-width="2"/><path d="M1046,158 L1057,143 1062,147 1050,161Z" fill="#d83030" stroke="#801010"/>
<g transform="translate(1525,153)"><path d="M-8,0 V-6 L0,-11 8,-6 V0Z" fill="#e4e4e4" stroke="#777"/><ellipse cy="4" rx="9" ry="5" fill="#444"/><path d="M-9,6 Q0,13 9,6" fill="none" stroke="#333" stroke-width="1.500"/></g>
<g transform="translate(1555,153)"><rect x="-10" y="-6" width="20" height="12" rx="6" transform="rotate(35)" fill="#f2f2f2" stroke="#666" stroke-width="1.500"/><ellipse cx="-3" cy="-2" rx="3" ry="5" fill="none" stroke="#777"/></g>
<rect x="1569.500" y="139.500" width="27" height="27" fill="none" stroke="#1a78d0" stroke-width="1.300"/>
<g transform="translate(1583,153)"><rect x="-10" y="-6.500" width="20" height="13" rx="6" transform="rotate(-30)" fill="#c01810" stroke="#601010"/><ellipse cx="5" cy="-3" rx="3.500" ry="5" transform="rotate(-30 5 -3)" fill="#801010"/></g>
<line x1="1605.500" y1="142" x2="1605.500" y2="164" stroke="#b0b0b0"/>
<g transform="translate(1628,153)"><path d="M-10,-8 L4,-10 L9,3 L2,9 L-7,-2Z" fill="#18a0a8" stroke="#105058"/><path d="M-3,4 L8,12" stroke="#222"/></g>
<g transform="translate(1655,153)"><rect x="-10" y="-6" width="20" height="12" rx="5" transform="rotate(35)" fill="#ddd" stroke="#555"/><path d="M-3,-10 L10,-3 6,6 -6,-3Z" fill="#68b020" stroke="#355010"/></g>
<g transform="translate(1683,153)"><circle r="10" fill="#eee" stroke="#555"/><path d="M0,-10 A10,10 0 0 0 0,10Z" fill="#d87410"/></g>
<line x1="1700.500" y1="142" x2="1700.500" y2="164" stroke="#b0b0b0"/>
<path d="M1708,146 L1714,142 1718,142 V164 L1714,164 1708,158Z" fill="#5aa0f0" stroke="#224"/>
</svg>
</body></html>
